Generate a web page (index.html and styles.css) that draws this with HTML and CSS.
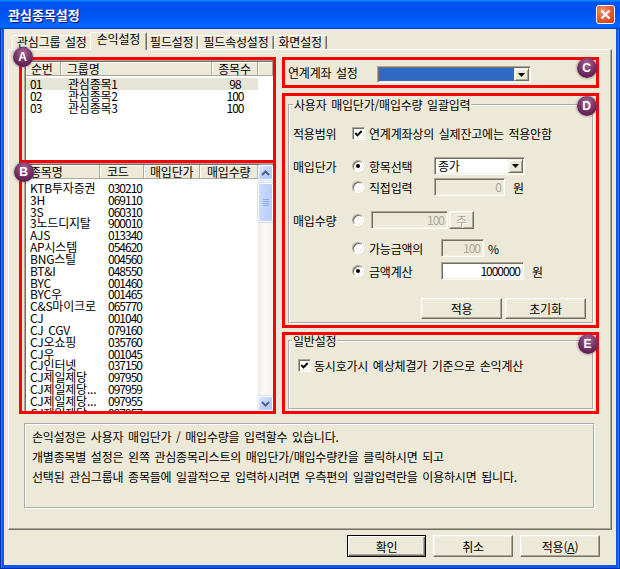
FILE: index.html
```html
<!DOCTYPE html>
<html lang="ko">
<head>
<meta charset="utf-8">
<title>관심종목설정</title>
<link rel="stylesheet" href="styles.css">
</head>
<body>
<div class="window">
  <header class="titlebar">
    <span class="title">관심종목설정</span>
    <span class="close"><svg width="11" height="11" viewBox="0 0 11 11"><path d="M1.5 1.5 L9.5 9.5 M9.5 1.5 L1.5 9.5" stroke="#fff" stroke-width="2.2"/></svg></span>
  </header>
  <div class="client">
    <nav class="tabs">
      <span class="tab">관심그룹 설정</span>
      <span class="tab active">손익설정</span>
      <span class="tab">필드설정</span>
      <span class="tab">필드속성설정</span>
      <span class="tab">화면설정</span>
    </nav>
    <section class="panel">
      <div class="main">
        <div class="col-left">
          <div class="anno anno-a">
            <span class="badge">A</span>
            <div class="list list-a">
              <div class="lhead">
                <span class="hc a-no">순번</span>
                <span class="hc a-name">그룹명</span>
                <span class="hc a-cnt">종목수</span>
                <span class="hc a-rest"></span>
              </div>
              <div class="lrows a-rows">
                <div class="lrow sel"><span class="a-no num">01</span><span class="a-name">관심종목1</span><span class="a-cnt num">98</span></div>
                <div class="lrow"><span class="a-no num">02</span><span class="a-name">관심종목2</span><span class="a-cnt num">100</span></div>
                <div class="lrow"><span class="a-no num">03</span><span class="a-name">관심종목3</span><span class="a-cnt num">100</span></div>
              </div>
            </div>
          </div>
          <div class="anno anno-b">
            <span class="badge">B</span>
            <div class="list list-b">
              <div class="tbl">
                <div class="lhead">
                  <span class="hc b-name">종목명</span>
                  <span class="hc b-code">코드</span>
                  <span class="hc b-price">매입단가</span>
                  <span class="hc b-qty">매입수량</span>
                </div>
                <div class="lrows b-rows">
                  <div class="lrow"><span class="b-name">KTB투자증권</span><span class="b-code num">030210</span></div>
                  <div class="lrow"><span class="b-name">3H</span><span class="b-code num">069110</span></div>
                  <div class="lrow"><span class="b-name">3S</span><span class="b-code num">060310</span></div>
                  <div class="lrow"><span class="b-name">3노드디지탈</span><span class="b-code num">900010</span></div>
                  <div class="lrow"><span class="b-name">AJS</span><span class="b-code num">013340</span></div>
                  <div class="lrow"><span class="b-name">AP시스템</span><span class="b-code num">054620</span></div>
                  <div class="lrow"><span class="b-name">BNG스틸</span><span class="b-code num">004560</span></div>
                  <div class="lrow"><span class="b-name">BT&amp;I</span><span class="b-code num">048550</span></div>
                  <div class="lrow"><span class="b-name">BYC</span><span class="b-code num">001460</span></div>
                  <div class="lrow"><span class="b-name">BYC우</span><span class="b-code num">001465</span></div>
                  <div class="lrow"><span class="b-name">C&amp;S마이크로</span><span class="b-code num">065770</span></div>
                  <div class="lrow"><span class="b-name">CJ</span><span class="b-code num">001040</span></div>
                  <div class="lrow"><span class="b-name">CJ CGV</span><span class="b-code num">079160</span></div>
                  <div class="lrow"><span class="b-name">CJ오쇼핑</span><span class="b-code num">035760</span></div>
                  <div class="lrow"><span class="b-name">CJ우</span><span class="b-code num">001045</span></div>
                  <div class="lrow"><span class="b-name">CJ인터넷</span><span class="b-code num">037150</span></div>
                  <div class="lrow"><span class="b-name">CJ제일제당</span><span class="b-code num">097950</span></div>
                  <div class="lrow"><span class="b-name">CJ제일제당...</span><span class="b-code num">097959</span></div>
                  <div class="lrow"><span class="b-name">CJ제일제당...</span><span class="b-code num">097955</span></div>
                  <div class="lrow"><span class="b-name">CJ제일제당...</span><span class="b-code num">097957</span></div>
                </div>
              </div>
              <div class="vscroll">
                <span class="sbtn"><svg width="9" height="6" viewBox="0 0 9 6"><path d="M1 5 L4.5 1.5 L8 5" fill="none" stroke="#4D6185" stroke-width="2"/></svg></span>
                <span class="strack"><span class="sthumb"><i></i><i></i><i></i><i></i></span></span>
                <span class="sbtn"><svg width="9" height="6" viewBox="0 0 9 6"><path d="M1 1 L4.5 4.5 L8 1" fill="none" stroke="#4D6185" stroke-width="2"/></svg></span>
              </div>
            </div>
          </div>
        </div>
        <div class="col-right">
          <div class="anno anno-c">
            <span class="badge">C</span>
            <div class="acct">
              <span class="acct-label">연계계좌 설정</span>
              <span class="combo combo-acct"><span class="combo-val hl"></span><span class="dd"><svg width="7" height="4" viewBox="0 0 7 4"><path d="M0 0 H7 L3.5 4 Z" fill="#000"/></svg></span></span>
            </div>
          </div>
          <div class="anno anno-d">
            <span class="badge">D</span>
            <fieldset class="group group-d">
              <legend>사용자 매입단가/매입수량 일괄입력</legend>
              <div class="row r1"><span class="lbl">적용범위</span><span class="chk"><svg width="9" height="9" viewBox="0 0 9 9"><polyline points="1.3,4 3.5,6.3 7.7,2" fill="none" stroke="#000" stroke-width="1.9"/></svg></span><span class="opt opt-chk">연계계좌상의 실제잔고에는 적용안함</span></div>
              <div class="row r2"><span class="lbl">매입단가</span><span class="radio on"></span><span class="opt w65">항목선택</span><span class="combo combo-price"><span class="combo-val">종가</span><span class="dd"><svg width="7" height="4" viewBox="0 0 7 4"><path d="M0 0 H7 L3.5 4 Z" fill="#000"/></svg></span></span></div>
              <div class="row r3"><span class="lbl"></span><span class="radio"></span><span class="opt w65">직접입력</span><span class="field dis f-direct">0</span><span class="unit u-won">원</span></div>
              <div class="row r4"><span class="lbl">매입수량</span><span class="radio"></span><span class="field dis f-qty">100</span><span class="btn dis btn-ju">주</span></div>
              <div class="row r5"><span class="lbl"></span><span class="radio"></span><span class="opt w72">가능금액의</span><span class="field dis f-pct">100</span><span class="unit u-pct">%</span></div>
              <div class="row r6"><span class="lbl"></span><span class="radio on"></span><span class="opt w72">금액계산</span><span class="field f-amt">1000000</span><span class="unit u-won">원</span></div>
              <div class="row-btns"><span class="btn btn-d">적용</span><span class="btn btn-d">초기화</span></div>
            </fieldset>
          </div>
          <div class="anno anno-e">
            <span class="badge">E</span>
            <fieldset class="group group-e">
              <legend>일반설정</legend>
              <div class="row e1"><span class="chk"><svg width="9" height="9" viewBox="0 0 9 9"><polyline points="1.3,4 3.5,6.3 7.7,2" fill="none" stroke="#000" stroke-width="1.9"/></svg></span><span class="opt opt-e">동시호가시 예상체결가 기준으로 손익계산</span></div>
            </fieldset>
          </div>
        </div>
      </div>
      <div class="info">
        <p>손익설정은 사용자 매입단가 / 매입수량을 입력할수 있습니다.</p>
        <p>개별종목별 설정은 왼쪽 관심종목리스트의 매입단가/매입수량칸을 클릭하시면 되고</p>
        <p>선택된 관심그룹내 종목들에 일괄적으로 입력하시려면 우측편의 일괄입력란을 이용하시면 됩니다.</p>
      </div>
    </section>
    <footer class="footer">
      <span class="btn btn-f default">확인</span>
      <span class="btn btn-f">취소</span>
      <span class="btn btn-f">적용(<u>A</u>)</span>
    </footer>
  </div>
</div>
</body>
</html>
```

FILE: styles.css
```css
* { box-sizing: border-box; }
html, body { margin: 0; padding: 0; }
body {
  width: 620px; height: 569px; overflow: hidden;
  font-family: "Noto Sans CJK KR", "Noto Sans", sans-serif;
  font-size: 12px; letter-spacing: -0.2px; word-spacing: 1.5px;
  color: #000; background: #fff;
}
p { margin: 0; }
.num { letter-spacing: -1px; }

.window {
  width: 620px; height: 569px;
  display: flex; flex-direction: column;
  padding: 0 4px 4px;
  background: #0D58E8;
  box-shadow: inset 1px 0 #0030B0, inset -1px 0 #0030B0, inset 0 -1px #0030B0, inset 2px 0 #2E7BF4, inset -2px 0 #2E7BF4;
}
.titlebar {
  margin: 0 -4px;
  height: 29px; flex: none;
  display: flex; align-items: center; justify-content: space-between;
  padding: 0 5px 0 8px;
  background: linear-gradient(180deg, #0997ff, #0053ee 8%, #0050ee 40%, #06f 88%, #06f 93%, #005bff 95%, #003dd7 96%, #003dd7);
}
.title {
  color: #fff; font-weight: bold; font-size: 13px; letter-spacing: 0;
  text-shadow: 1px 1px #0F1089;
}
.close {
  width: 19px; height: 19px;
  border: 1px solid #fff; border-radius: 3px;
  background: radial-gradient(circle at 35% 30%, #F4A58A 0, #E46A45 35%, #D5461C 80%, #C23A12 100%);
  display: flex; align-items: center; justify-content: center;
}

.client {
  flex: 1; background: #ECE9D8;
  display: flex; flex-direction: column;
  padding: 3px 4px 0;
}

/* tabs */
.tabs { height: 17px; display: flex; align-items: flex-end; padding-left: 4px; flex: none; }
.tab {
  height: 14px; padding: 0 4px;
  line-height: 12px; white-space: nowrap;
  border: 1px solid; border-bottom: 0;
  border-color: #fff #716F64 transparent #fff;
  box-shadow: inset -1px 0 #ACA899;
  border-radius: 2px 2px 0 0;
  background: #ECE9D8;
}
.tab.active {
  height: 18px; margin: 0 -2px -1px; padding: 0 6px;
  position: relative; z-index: 2;
}

.panel {
  height: 481px; flex: none;
  border: 1px solid; border-color: #fff #716F64 #716F64 #fff;
  box-shadow: inset -1px -1px #ACA899;
  padding: 7px 12px 0 10px;
  display: flex; flex-direction: column;
}
.main { display: flex; gap: 6px; height: 357px; }
.col-left { width: 257px; display: flex; flex-direction: column; }
.col-right { flex: 1; display: flex; flex-direction: column; }

.anno { position: relative; border: 3px solid #FF0000; }
.anno-a { height: 106px; }
.anno-b { height: 254px; margin-top: -3px; }
.anno-c { height: 31px; }
.anno-d { height: 235px; margin-top: 5px; display: flex; flex-direction: column; }
.anno-e { height: 82px; margin-top: 4px; display: flex; flex-direction: column; }

.badge {
  position: absolute; z-index: 5;
  width: 20px; height: 20px; border-radius: 50%;
  background: radial-gradient(circle at 50% 30%, #a86a9c 0%, #7c386b 42%, #5c1f4c 78%, #4a1540 100%);
  box-shadow: 0 0 2px 1px rgba(110, 60, 100, .35);
  color: #fff; font: bold 12px/20px "Liberation Sans", Arial, sans-serif;
  letter-spacing: 0; word-spacing: 0; text-align: center;
}
.anno-a > .badge { left: -9.5px; top: -13px; }
.anno-b > .badge { left: -8.5px; top: -1px; }
.anno-c > .badge { right: -0.5px; top: -2.5px; }
.anno-d > .badge { right: -0.5px; top: -0.5px; }
.anno-e > .badge { right: -1.5px; top: -1.5px; }

/* lists */
.list {
  margin-left: 2px; height: 100%; overflow: hidden;
  background: #fff;
  border-top: 1px solid #ACA899; border-left: 1px solid #ACA899;
  box-shadow: inset 1px 1px #716F64;
  padding: 1px 0 0 1px;
}
.lhead { display: flex; height: 14px; background: #ECE9D8; }
.hc {
  height: 14px; line-height: 13px; white-space: nowrap;
  border-right: 1px solid #ACA899; border-bottom: 1px solid #ACA899;
  box-shadow: inset 1px 1px #fff;
}
.lrow { display: flex; white-space: nowrap; }
.lrow > span { flex: none; }

.a-no { width: 35px; }
.a-name { width: 151px; }
.a-cnt { width: 46px; text-align: center; }
.a-rest { flex: 1; }
.lhead .a-no { padding-left: 5px; }
.lhead .a-name { padding-left: 6px; }
.a-rows { padding-top: 2px; }
.a-rows .lrow { height: 12px; line-height: 12px; width: 232px; }
.a-rows .lrow.sel { background: #E6E3D7; }
.a-rows .a-no { padding-left: 4px; }
.a-rows .a-name { padding-left: 7px; }

.list-b { display: flex; }
.tbl { width: 232px; flex: none; }
.b-name { width: 74px; }
.b-code { width: 44px; }
.b-price { width: 56px; }
.b-qty { width: 58px; }
.lhead .b-name { padding-left: 4px; }
.lhead .b-code { padding-left: 7px; }
.lhead .b-price { padding-left: 6px; }
.lhead .b-qty { padding-left: 7px; }
.b-rows { padding-top: 3px; }
.b-rows .lrow { height: 11.83px; line-height: 11.83px; }
.b-rows .b-name { padding-left: 4px; }
.b-rows .b-code { padding-left: 8px; }

.vscroll {
  width: 15px; flex: none; height: 100%;
  display: flex; flex-direction: column;
  background: linear-gradient(90deg, #EEEDE5, #FAF9F5 40%, #F3F2EC);
}
.sbtn {
  height: 15px; flex: none;
  border: 1px solid #fff; border-radius: 2px;
  background: linear-gradient(135deg, #DCE6FE, #BCCFFB 60%, #B0C6F8);
  box-shadow: 0 0 0 0.5px #B7C9F2;
  display: flex; align-items: center; justify-content: center;
}
.strack { flex: 1; padding-top: 3px; }
.sthumb {
  height: 39px;
  display: flex; flex-direction: column; align-items: center; justify-content: center; gap: 1px;
  border: 1px solid #fff; border-radius: 2px;
  background: linear-gradient(90deg, #CBD9FD, #BACDFA);
  box-shadow: 0 0 0 0.5px #A9BFF1;
}
.sthumb i { display: block; width: 6px; height: 1px; background: #8EA9EC; }

/* right side */
.acct { display: flex; align-items: flex-start; padding-left: 3px; }
.acct-label { width: 89px; margin-top: 6px; line-height: 14px; white-space: nowrap; }
.combo {
  display: flex; height: 17px;
  border: 1px solid; border-color: #ACA899 #fff #fff #ACA899;
  box-shadow: inset 1px 1px #716F64, inset -1px -1px #F1EFE2;
  background: #fff; padding: 1px;
}
.combo-acct { width: 154px; margin-top: 6px; }
.combo-val { flex: 1; line-height: 13px; padding-left: 2px; white-space: nowrap; }
.combo-val.hl { background: #316AC5; }
.dd {
  width: 15px; flex: none;
  background: #ECE9D8;
  border: 1px solid; border-color: #F1EFE2 #716F64 #716F64 #F1EFE2;
  box-shadow: inset 1px 1px #fff, inset -1px -1px #ACA899;
  display: flex; align-items: center; justify-content: center;
}
.combo-price { width: 91px; height: 18px; }
.combo-price .combo-val { line-height: 14px; }

.group {
  margin: 0; min-width: 0;
  border: 2px groove #fff;
}
.group legend { padding: 0 1px; line-height: 12px; white-space: nowrap; }
.group-d { flex: 1; margin: 3px 2px 1px 3px; padding: 13px 6px 0 3px; }
.group-e { flex: 1; margin: 0 2px 1px 3px; padding: 9px 6px 0 2px; }

.row { display: flex; align-items: center; height: 18px; white-space: nowrap; }
.r2 { margin-top: 15px; }
.r3 { margin-top: 3px; }
.r4 { margin-top: 15px; }
.r5 { margin-top: 10px; }
.r6 { margin-top: 5px; }
.e1 { margin-left: 6px; }
.lbl { width: 59px; flex: none; }
.opt { flex: none; }
.opt-chk { margin-left: 4px; }
.opt-e { margin-left: 3px; }
.w65 { width: 65px; margin-left: 5px; }
.w72 { width: 72px; margin-left: 5px; }

.chk {
  width: 13px; height: 13px; flex: none;
  border: 1px solid; border-color: #ACA899 #fff #fff #ACA899;
  box-shadow: inset 1px 1px #716F64, inset -1px -1px #F1EFE2;
  background: #fff;
  display: flex; align-items: center; justify-content: center;
}
.radio {
  width: 12px; height: 12px; flex: none; border-radius: 50%;
  border: 1px solid; border-color: #ACA899 #fff #fff #ACA899;
  box-shadow: inset 1px 1px #716F64, inset -1px -1px #F1EFE2;
  background: #fff;
  display: flex; align-items: center; justify-content: center;
}
.radio.on::after { content: ""; width: 4px; height: 4px; border-radius: 50%; background: #000; }

.field {
  height: 18px; flex: none;
  border: 1px solid; border-color: #ACA899 #fff #fff #ACA899;
  box-shadow: inset 1px 1px #716F64, inset -1px -1px #F1EFE2;
  background: #fff;
  text-align: right; line-height: 15px; padding-right: 3px;
  letter-spacing: -1px;
}
.field.dis { background: #ECE9D8; color: #ACA899; }
.f-direct { width: 71px; }
.f-qty { width: 77px; margin-left: 7px; }
.f-pct { width: 43px; }
.f-amt { width: 83px; }
.unit { flex: none; }
.u-won { margin-left: 8px; }
.u-pct { margin-left: 4px; }

.btn {
  display: flex; align-items: center; justify-content: center; flex: none;
  background: #ECE9D8;
  border: 1px solid; border-color: #fff #716F64 #716F64 #fff;
  box-shadow: inset -1px -1px #ACA899, inset 1px 1px #F1EFE2;
  white-space: nowrap;
}
.btn.dis { color: #ACA899; text-shadow: 1px 1px #fff; }
.btn-ju { width: 25px; height: 18px; margin-left: 1px; }
.row-btns { display: flex; justify-content: flex-end; gap: 3px; margin-top: 18px; }
.btn-d { width: 81px; height: 21px; }

.info {
  margin: 9px 4px 0 5px; height: 86px;
  border: 2px groove #fff;
  padding: 2px 6px;
  line-height: 20px; white-space: nowrap;
}

.footer { display: flex; justify-content: flex-end; gap: 7px; margin-top: 5px; padding-right: 12px; }
.btn-f { width: 80px; height: 22px; }
.btn-f.default {
  width: 79px;
  border: 1px solid #000;
  box-shadow: inset 1px 1px #fff, inset -1px -1px #716F64, inset -2px -2px #ACA899;
}
.btn-f u { text-decoration: underline; text-underline-offset: 1px; }
```
